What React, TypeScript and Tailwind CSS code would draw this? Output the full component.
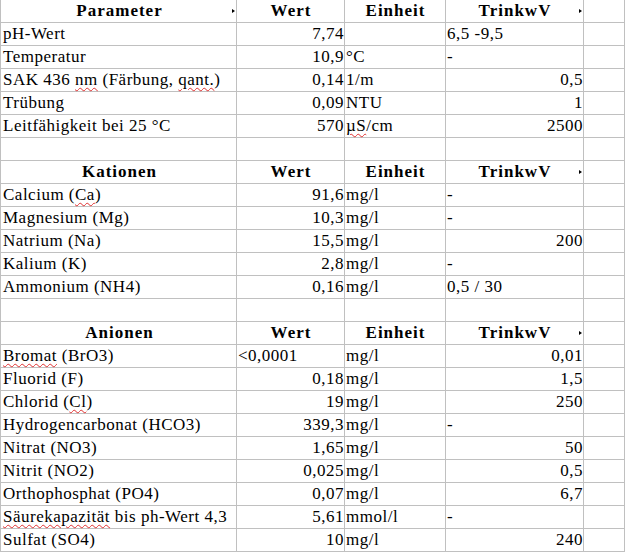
import type { ReactNode } from "react";

type Cell = { v?: ReactNode; a?: "l" | "r" | "c"; mark?: boolean };

// rote Schlangenlinie der Rechtschreibprüfung
function Sq({ children }: { children: ReactNode }) {
  return (
    <span className="underline decoration-wavy decoration-[#e03030] decoration-1 underline-offset-[2px]">
      {children}
    </span>
  );
}

const head = (title: string): Cell[] => [
  { v: title, a: "c", mark: title === "Parameter" },
  { v: "Wert", a: "c" },
  { v: "Einheit", a: "c" },
  { v: "TrinkwV", a: "c", mark: true },
];

const dash: Cell = { v: "-", a: "l" };

const rows: { head?: boolean; cells: Cell[] }[] = [
  { head: true, cells: head("Parameter") },
  { cells: [{ v: "pH-Wert" }, { v: "7,74", a: "r" }, {}, { v: "6,5 -9,5" }] },
  { cells: [{ v: "Temperatur" }, { v: "10,9", a: "r" }, { v: "°C" }, dash] },
  {
    cells: [
      { v: <>SAK 436 <Sq>nm</Sq> (Färbung, <Sq>qant.</Sq>)</> },
      { v: "0,14", a: "r" },
      { v: "1/m" },
      { v: "0,5", a: "r" },
    ],
  },
  { cells: [{ v: "Trübung" }, { v: "0,09", a: "r" }, { v: "NTU" }, { v: "1", a: "r" }] },
  {
    cells: [
      { v: "Leitfähigkeit bei 25 °C" },
      { v: "570", a: "r" },
      { v: <><Sq>µS</Sq>/cm</> },
      { v: "2500", a: "r" },
    ],
  },
  { cells: [{}, {}, {}, {}] },
  { head: true, cells: head("Kationen") },
  { cells: [{ v: <>Calcium (<Sq>Ca</Sq>)</> }, { v: "91,6", a: "r" }, { v: "mg/l" }, dash] },
  { cells: [{ v: "Magnesium (Mg)" }, { v: "10,3", a: "r" }, { v: "mg/l" }, dash] },
  { cells: [{ v: "Natrium (Na)" }, { v: "15,5", a: "r" }, { v: "mg/l" }, { v: "200", a: "r" }] },
  { cells: [{ v: "Kalium (K)" }, { v: "2,8", a: "r" }, { v: "mg/l" }, dash] },
  { cells: [{ v: "Ammonium (NH4)" }, { v: "0,16", a: "r" }, { v: "mg/l" }, { v: "0,5 / 30" }] },
  { cells: [{}, {}, {}, {}] },
  { head: true, cells: head("Anionen") },
  { cells: [{ v: <><Sq>Bromat</Sq> (BrO3)</> }, { v: "<0,0001" }, { v: "mg/l" }, { v: "0,01", a: "r" }] },
  { cells: [{ v: "Fluorid (F)" }, { v: "0,18", a: "r" }, { v: "mg/l" }, { v: "1,5", a: "r" }] },
  { cells: [{ v: <>Chlorid (<Sq>Cl</Sq>)</> }, { v: "19", a: "r" }, { v: "mg/l" }, { v: "250", a: "r" }] },
  { cells: [{ v: "Hydrogencarbonat (HCO3)" }, { v: "339,3", a: "r" }, { v: "mg/l" }, dash] },
  { cells: [{ v: "Nitrat (NO3)" }, { v: "1,65", a: "r" }, { v: "mg/l" }, { v: "50", a: "r" }] },
  { cells: [{ v: "Nitrit (NO2)" }, { v: "0,025", a: "r" }, { v: "mg/l" }, { v: "0,5", a: "r" }] },
  { cells: [{ v: "Orthophosphat (PO4)" }, { v: "0,07", a: "r" }, { v: "mg/l" }, { v: "6,7", a: "r" }] },
  {
    cells: [
      { v: <><Sq>Säurekapazität</Sq> bis ph-Wert 4,3</> },
      { v: "5,61", a: "r" },
      { v: "mmol/l" },
      dash,
    ],
  },
  { cells: [{ v: "Sulfat (SO4)" }, { v: "10", a: "r" }, { v: "mg/l" }, { v: "240", a: "r" }] },
];

export default function App() {
  return (
    <div className="w-[625px] h-[553px] overflow-hidden bg-white text-black font-['Liberation_Serif','Times_New_Roman',serif] text-[17px] leading-[22px]">
      <div className="grid grid-cols-[237px_108px_101px_138px_1fr]">
        {rows.map((row, ri) =>
          [...row.cells, {} as Cell].map((c, ci) => (
            <div
              key={`${ri}-${ci}`}
              className={`relative h-[23px] border-b border-r border-[#c0c0c0] whitespace-nowrap overflow-visible ${
                ci === 0 ? "border-l pl-[2px]" : "pl-[1px]"
              } ${
                c.a === "r" ? "text-right pr-0" : c.a === "c" ? "text-center" : "text-left"
              } ${row.head ? "font-bold tracking-[1px]" : "tracking-[0.5px]"}`}
            >
              {c.v}
              {c.mark && (
                <span className="absolute right-[1px] top-[9px] w-0 h-0 border-y-[2px] border-y-transparent border-l-[3px] border-l-black" />
              )}
            </div>
          ))
        )}
      </div>
    </div>
  );
}
